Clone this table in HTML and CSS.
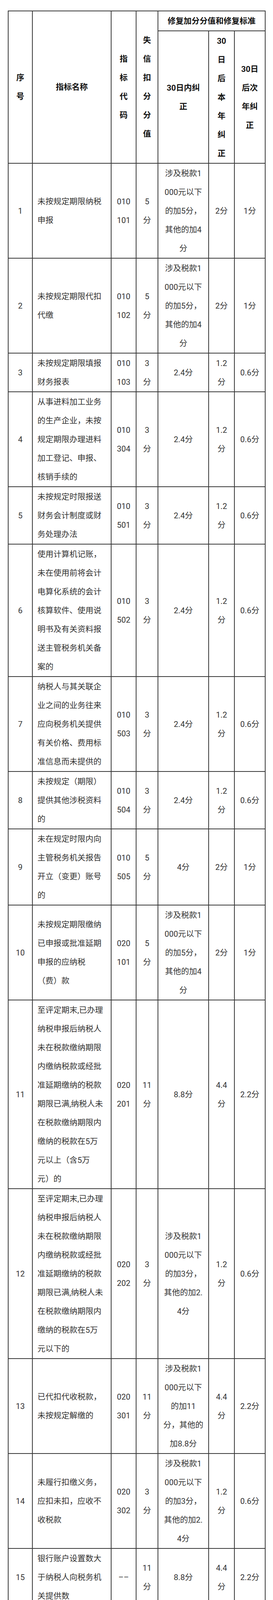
FILE: index.html
```html
<!DOCTYPE html>
<html lang="zh-CN">
<head>
<meta charset="utf-8">
<title>纳税信用修复加分标准</title>
<link rel="stylesheet" href="styles.css">
</head>
<body>
<div class="page">
<table class="credit">
  <colgroup>
    <col class="c-num"><col class="c-name"><col class="c-code"><col class="c-score"><col class="c-fix1"><col class="c-fix2"><col class="c-fix3">
  </colgroup>
  <thead>
    <tr>
      <th rowspan="2"><span class="l">序</span><span class="l">号</span></th>
      <th rowspan="2"><span class="l">指标名称</span></th>
      <th rowspan="2"><span class="l">指</span><span class="l">标</span><span class="l">代</span><span class="l">码</span></th>
      <th rowspan="2"><span class="l">失</span><span class="l">信</span><span class="l">扣</span><span class="l">分</span><span class="l">分</span><span class="l">值</span></th>
      <th colspan="3"><span class="l">修复加分分值和修复标准</span></th>
    </tr>
    <tr>
      <th><span class="l">30日内纠</span><span class="l">正</span></th>
      <th><span class="l">30</span><span class="l">日</span><span class="l">后</span><span class="l">本</span><span class="l">年</span><span class="l">纠</span><span class="l">正</span></th>
      <th><span class="l">30日</span><span class="l">后次</span><span class="l">年纠</span><span class="l">正</span></th>
    </tr>
  </thead>
  <tbody>
    <tr>
      <td><span class="l">1</span></td>
      <td class="name"><span class="l">未按规定期限纳税</span><span class="l">申报</span></td>
      <td><span class="l">010</span><span class="l">101</span></td>
      <td><span class="l">5</span><span class="l">分</span></td>
      <td><span class="l">涉及税款1</span><span class="l">000元以下</span><span class="l">的加5分，</span><span class="l">其他的加4</span><span class="l">分</span></td>
      <td><span class="l">2分</span></td>
      <td><span class="l">1分</span></td>
    </tr>
    <tr>
      <td><span class="l">2</span></td>
      <td class="name"><span class="l">未按规定期限代扣</span><span class="l">代缴</span></td>
      <td><span class="l">010</span><span class="l">102</span></td>
      <td><span class="l">5</span><span class="l">分</span></td>
      <td><span class="l">涉及税款1</span><span class="l">000元以下</span><span class="l">的加5分，</span><span class="l">其他的加4</span><span class="l">分</span></td>
      <td><span class="l">2分</span></td>
      <td><span class="l">1分</span></td>
    </tr>
    <tr>
      <td><span class="l">3</span></td>
      <td class="name"><span class="l">未按规定期限填报</span><span class="l">财务报表</span></td>
      <td><span class="l">010</span><span class="l">103</span></td>
      <td><span class="l">3</span><span class="l">分</span></td>
      <td><span class="l">2.4分</span></td>
      <td><span class="l">1.2</span><span class="l">分</span></td>
      <td><span class="l">0.6分</span></td>
    </tr>
    <tr>
      <td><span class="l">4</span></td>
      <td class="name"><span class="l">从事进料加工业务</span><span class="l">的生产企业，未按</span><span class="l">规定期限办理进料</span><span class="l">加工登记、申报、</span><span class="l">核销手续的</span></td>
      <td><span class="l">010</span><span class="l">304</span></td>
      <td><span class="l">3</span><span class="l">分</span></td>
      <td><span class="l">2.4分</span></td>
      <td><span class="l">1.2</span><span class="l">分</span></td>
      <td><span class="l">0.6分</span></td>
    </tr>
    <tr>
      <td><span class="l">5</span></td>
      <td class="name"><span class="l">未按规定时限报送</span><span class="l">财务会计制度或财</span><span class="l">务处理办法</span></td>
      <td><span class="l">010</span><span class="l">501</span></td>
      <td><span class="l">3</span><span class="l">分</span></td>
      <td><span class="l">2.4分</span></td>
      <td><span class="l">1.2</span><span class="l">分</span></td>
      <td><span class="l">0.6分</span></td>
    </tr>
    <tr>
      <td><span class="l">6</span></td>
      <td class="name"><span class="l">使用计算机记账，</span><span class="l">未在使用前将会计</span><span class="l">电算化系统的会计</span><span class="l">核算软件、使用说</span><span class="l">明书及有关资料报</span><span class="l">送主管税务机关备</span><span class="l">案的</span></td>
      <td><span class="l">010</span><span class="l">502</span></td>
      <td><span class="l">3</span><span class="l">分</span></td>
      <td><span class="l">2.4分</span></td>
      <td><span class="l">1.2</span><span class="l">分</span></td>
      <td><span class="l">0.6分</span></td>
    </tr>
    <tr>
      <td><span class="l">7</span></td>
      <td class="name"><span class="l">纳税人与其关联企</span><span class="l">业之间的业务往来</span><span class="l">应向税务机关提供</span><span class="l">有关价格、费用标</span><span class="l">准信息而未提供的</span></td>
      <td><span class="l">010</span><span class="l">503</span></td>
      <td><span class="l">3</span><span class="l">分</span></td>
      <td><span class="l">2.4分</span></td>
      <td><span class="l">1.2</span><span class="l">分</span></td>
      <td><span class="l">0.6分</span></td>
    </tr>
    <tr>
      <td><span class="l">8</span></td>
      <td class="name"><span class="l">未按规定（期限）</span><span class="l">提供其他涉税资料</span><span class="l">的</span></td>
      <td><span class="l">010</span><span class="l">504</span></td>
      <td><span class="l">3</span><span class="l">分</span></td>
      <td><span class="l">2.4分</span></td>
      <td><span class="l">1.2</span><span class="l">分</span></td>
      <td><span class="l">0.6分</span></td>
    </tr>
    <tr>
      <td><span class="l">9</span></td>
      <td class="name"><span class="l">未在规定时限内向</span><span class="l">主管税务机关报告</span><span class="l">开立（变更）账号</span><span class="l">的</span></td>
      <td><span class="l">010</span><span class="l">505</span></td>
      <td><span class="l">5</span><span class="l">分</span></td>
      <td><span class="l">4分</span></td>
      <td><span class="l">2分</span></td>
      <td><span class="l">1分</span></td>
    </tr>
    <tr>
      <td><span class="l">10</span></td>
      <td class="name"><span class="l">未按规定期限缴纳</span><span class="l">已申报或批准延期</span><span class="l">申报的应纳税</span><span class="l">（费）款</span></td>
      <td><span class="l">020</span><span class="l">101</span></td>
      <td><span class="l">5</span><span class="l">分</span></td>
      <td><span class="l">涉及税款1</span><span class="l">000元以下</span><span class="l">的加5分，</span><span class="l">其他的加4</span><span class="l">分</span></td>
      <td><span class="l">2分</span></td>
      <td><span class="l">1分</span></td>
    </tr>
    <tr>
      <td><span class="l">11</span></td>
      <td class="name"><span class="l">至评定期末,已办理</span><span class="l">纳税申报后纳税人</span><span class="l">未在税款缴纳期限</span><span class="l">内缴纳税款或经批</span><span class="l">准延期缴纳的税款</span><span class="l">期限已满,纳税人未</span><span class="l">在税款缴纳期限内</span><span class="l">缴纳的税款在5万</span><span class="l">元以上（含5万</span><span class="l">元）的</span></td>
      <td><span class="l">020</span><span class="l">201</span></td>
      <td><span class="l">11</span><span class="l">分</span></td>
      <td><span class="l">8.8分</span></td>
      <td><span class="l">4.4</span><span class="l">分</span></td>
      <td><span class="l">2.2分</span></td>
    </tr>
    <tr>
      <td><span class="l">12</span></td>
      <td class="name"><span class="l">至评定期末,已办理</span><span class="l">纳税申报后纳税人</span><span class="l">未在税款缴纳期限</span><span class="l">内缴纳税款或经批</span><span class="l">准延期缴纳的税款</span><span class="l">期限已满,纳税人未</span><span class="l">在税款缴纳期限内</span><span class="l">缴纳的税款在5万</span><span class="l">元以下的</span></td>
      <td><span class="l">020</span><span class="l">202</span></td>
      <td><span class="l">3</span><span class="l">分</span></td>
      <td><span class="l">涉及税款1</span><span class="l">000元以下</span><span class="l">的加3分，</span><span class="l">其他的加2.</span><span class="l">4分</span></td>
      <td><span class="l">1.2</span><span class="l">分</span></td>
      <td><span class="l">0.6分</span></td>
    </tr>
    <tr>
      <td><span class="l">13</span></td>
      <td class="name"><span class="l">已代扣代收税款，</span><span class="l">未按规定解缴的</span></td>
      <td><span class="l">020</span><span class="l">301</span></td>
      <td><span class="l">11</span><span class="l">分</span></td>
      <td><span class="l">涉及税款1</span><span class="l">000元以下</span><span class="l">的加11</span><span class="l">分，其他的</span><span class="l">加8.8分</span></td>
      <td><span class="l">4.4</span><span class="l">分</span></td>
      <td><span class="l">2.2分</span></td>
    </tr>
    <tr>
      <td><span class="l">14</span></td>
      <td class="name"><span class="l">未履行扣缴义务，</span><span class="l">应扣未扣，应收不</span><span class="l">收税款</span></td>
      <td><span class="l">020</span><span class="l">302</span></td>
      <td><span class="l">3</span><span class="l">分</span></td>
      <td><span class="l">涉及税款1</span><span class="l">000元以下</span><span class="l">的加3分，</span><span class="l">其他的加2.</span><span class="l">4分</span></td>
      <td><span class="l">1.2</span><span class="l">分</span></td>
      <td><span class="l">0.6分</span></td>
    </tr>
    <tr>
      <td><span class="l">15</span></td>
      <td class="name"><span class="l">银行账户设置数大</span><span class="l">于纳税人向税务机</span><span class="l">关提供数</span></td>
      <td><span class="l">––</span></td>
      <td><span class="l">11</span><span class="l">分</span></td>
      <td><span class="l">8.8分</span></td>
      <td><span class="l">4.4</span><span class="l">分</span></td>
      <td><span class="l">2.2分</span></td>
    </tr>
    <tr>
      <td><span class="l">16</span></td>
      <td class="name"><span class="l">有非正常户记录的</span><span class="l">纳税人</span></td>
      <td><span class="l">040</span><span class="l">103</span></td>
      <td><span class="l">直</span><span class="l">接</span><span class="l">判</span><span class="l">D</span></td>
      <td class="rule" colspan="3"><span class="l">履行相应法律义务并由税</span><span class="l">务机关依法解除非正常户</span><span class="l">状态的，税务机关依据纳</span><span class="l">税人申请重新评价纳税信</span><span class="l">用级别，但不得评价为A级</span></td>
    </tr>
    <tr>
      <td><span class="l">17</span></td>
      <td class="name"><span class="l">在规定期限内未补</span><span class="l">交或足额补缴税</span><span class="l">款、滞纳金和罚款</span></td>
      <td><span class="l">050</span><span class="l">107</span></td>
      <td><span class="l">直</span><span class="l">接</span><span class="l">判</span><span class="l">D</span></td>
      <td class="rule" colspan="3"><span class="l">在税务机关处理结论明确</span><span class="l">的期限期满后60日内足额</span><span class="l">补缴的（构成犯罪的除</span><span class="l">外），税务机关依据纳税</span><span class="l">人申请重新评价纳税信用</span><span class="l">级别，但不得评价为A级</span></td>
    </tr>
    <tr>
      <td><span class="l">18</span></td>
      <td class="name"><span class="l">非正常户直接责任</span><span class="l">人员注册登记或负</span><span class="l">责经营的其他纳税</span><span class="l">户</span></td>
      <td><span class="l">040</span><span class="l">104</span></td>
      <td><span class="l">直</span><span class="l">接</span><span class="l">判</span><span class="l">D</span></td>
      <td class="rule" colspan="3"><span class="l">非正常户纳税人纳税信用</span><span class="l">修复后纳税信用级别不为D</span><span class="l">级的，税务机关依据纳税</span><span class="l">人申请重新评价纳税信用</span><span class="l">级别</span></td>
    </tr>
    <tr>
      <td><span class="l">19</span></td>
      <td class="name"><span class="l">D级纳税人的直接</span><span class="l">责任人员注册登记</span><span class="l">或负责经营的其他</span><span class="l">纳税户</span></td>
      <td><span class="l">040</span><span class="l">105</span></td>
      <td><span class="l">直</span><span class="l">接</span><span class="l">判</span><span class="l">D</span></td>
      <td class="rule" colspan="3"><span class="l">D级纳税人纳税信用修复后</span><span class="l">纳税信用级别不为D级的，</span><span class="l">税务机关依据纳税人申请</span><span class="l">重新评价纳税信用级别</span></td>
    </tr>
  </tbody>
</table>
</div>
</body>
</html>
```

FILE: styles.css
```css
html, body {
  margin: 0;
  padding: 0;
  background: #ffffff;
}

.page {
  padding: 27px 0 0 20px;
  font-family: Roboto, "Noto Sans CJK SC", sans-serif;
  font-size: 20.5px;
  line-height: 48px;
  color: #333333;
}

.credit {
  width: 659px;
  table-layout: fixed;
  border-collapse: collapse;
}

.c-num { width: 62px; }
.c-name { width: 202px; }
.c-code { width: 64px; }
.c-score { width: 56px; }
.c-fix1 { width: 130px; }
.c-fix2 { width: 66px; }
.c-fix3 { width: 79px; }

.credit th,
.credit td {
  border: 2px solid #383838;
  padding: 0.5px 0;
  vertical-align: middle;
  white-space: nowrap;
  text-align: center;
}

.credit th {
  font-weight: 700;
  color: #111111;
}

.credit td.name,
.credit td.rule {
  text-align: left;
  padding-left: 12px;
}

.l {
  display: block;
  height: 48px;
  line-height: 48px;
}
```
